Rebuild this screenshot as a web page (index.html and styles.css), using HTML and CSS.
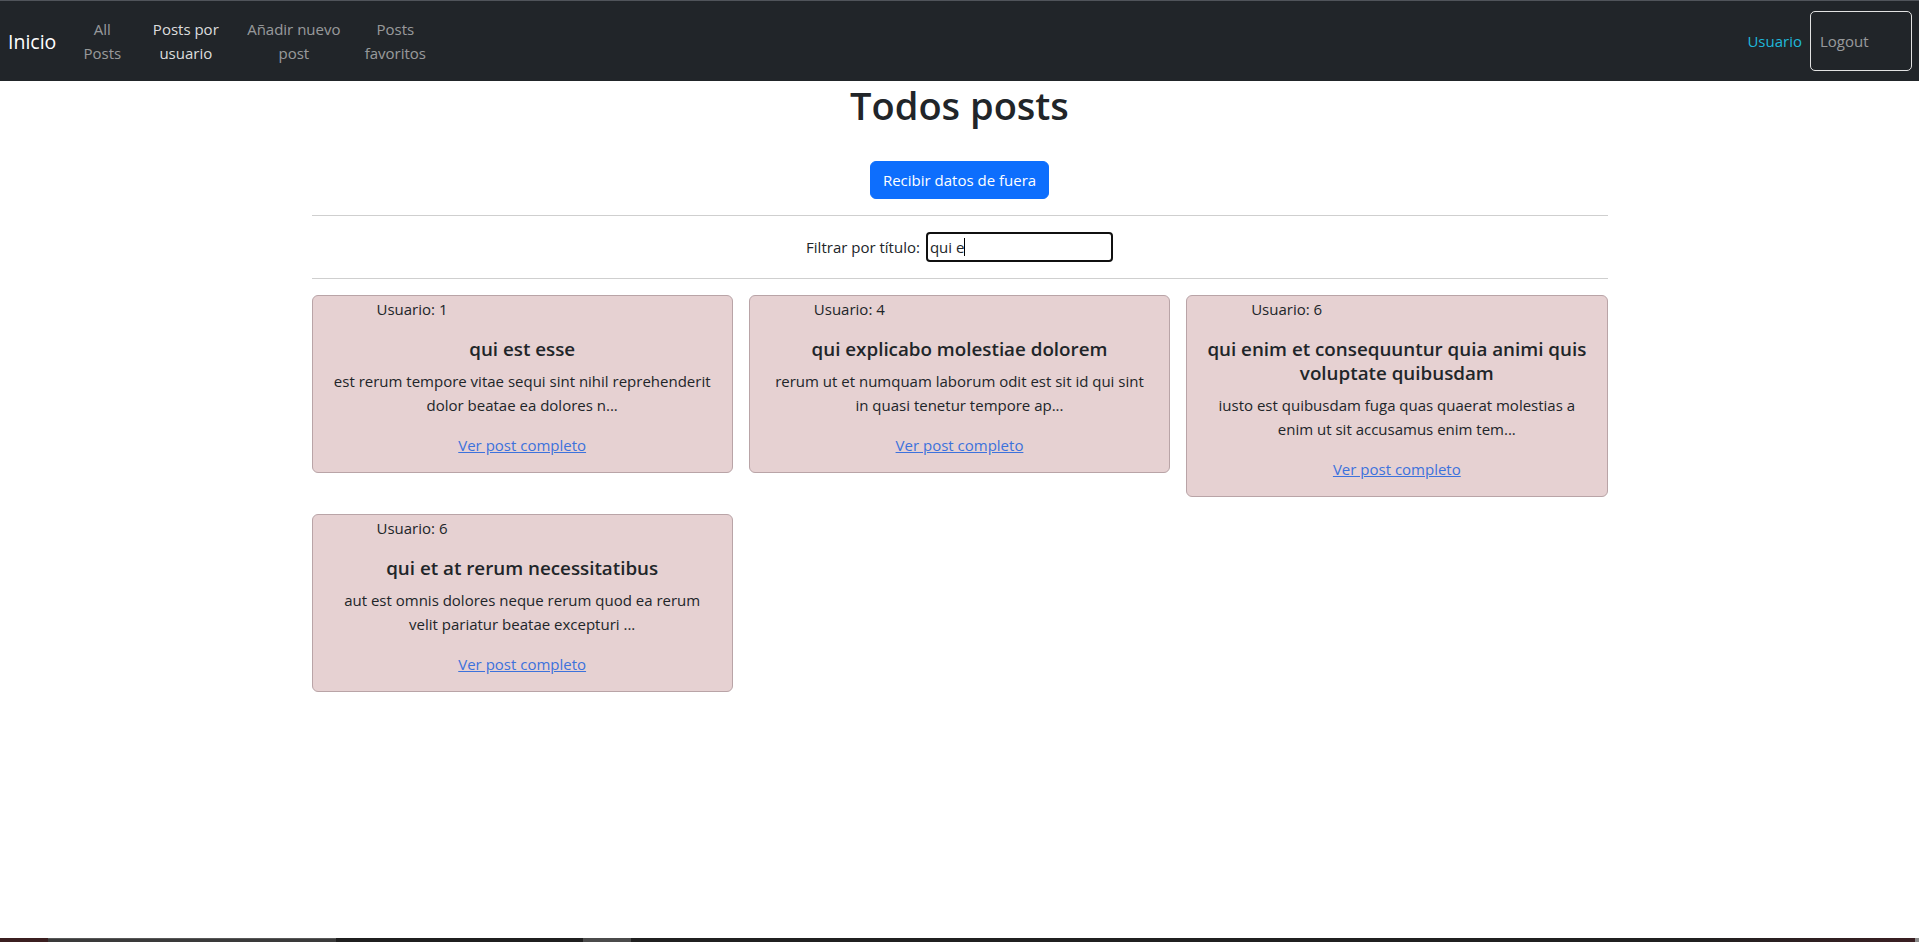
FILE: index.html
```html
<!DOCTYPE html>
<html lang="es">
<head>
<meta charset="utf-8">
<title>Todos posts</title>
<link rel="stylesheet" href="styles.css">
</head>
<body>
<nav class="navbar">
  <a class="brand" href="#">Inicio</a>
  <ul class="nav-list">
    <li class="nav-item w1"><a class="nav-link" href="#">All Posts</a></li>
    <li class="nav-item w2"><a class="nav-link active" href="#">Posts por usuario</a></li>
    <li class="nav-item w3"><a class="nav-link" href="#">Añadir nuevo post</a></li>
    <li class="nav-item w4"><a class="nav-link" href="#">Posts favoritos</a></li>
  </ul>
  <div class="nav-right">
    <span class="user-link">Usuario</span>
    <button class="logout" type="button">Logout</button>
  </div>
</nav>

<main class="container">
  <h1 class="page-title">Todos posts</h1>
  <div class="actions">
    <button class="btn-primary" type="button">Recibir datos de fuera</button>
  </div>
  <hr class="divider">
  <div class="filter-row">
    <label class="filter-label">Filtrar por título:</label>
    <div class="filter-input"><span class="filter-value">qui e</span><span class="caret"></span></div>
  </div>
  <hr class="divider">

  <section class="cards">
    <article class="card">
      <div class="card-user">Usuario: 1</div>
      <div class="card-body">
        <h5 class="card-title">qui est esse</h5>
        <p class="card-text">est rerum tempore vitae sequi sint nihil reprehenderit dolor beatae ea dolores n...</p>
        <a class="card-link" href="#">Ver post completo</a>
      </div>
    </article>
    <article class="card">
      <div class="card-user">Usuario: 4</div>
      <div class="card-body">
        <h5 class="card-title">qui explicabo molestiae dolorem</h5>
        <p class="card-text">rerum ut et numquam laborum odit est sit id qui sint in quasi tenetur tempore ap...</p>
        <a class="card-link" href="#">Ver post completo</a>
      </div>
    </article>
    <article class="card">
      <div class="card-user">Usuario: 6</div>
      <div class="card-body">
        <h5 class="card-title">qui enim et consequuntur quia animi quis voluptate quibusdam</h5>
        <p class="card-text">iusto est quibusdam fuga quas quaerat molestias a enim ut sit accusamus enim tem...</p>
        <a class="card-link" href="#">Ver post completo</a>
      </div>
    </article>
    <article class="card">
      <div class="card-user">Usuario: 6</div>
      <div class="card-body">
        <h5 class="card-title">qui et at rerum necessitatibus</h5>
        <p class="card-text">aut est omnis dolores neque rerum quod ea rerum velit pariatur beatae excepturi ...</p>
        <a class="card-link" href="#">Ver post completo</a>
      </div>
    </article>
  </section>
</main>

<footer class="taskbar">
  <span class="tb-seg tb-red"></span>
  <span class="tb-seg tb-gray"></span>
  <span class="tb-seg tb-dark1"></span>
  <span class="tb-seg tb-light"></span>
  <span class="tb-seg tb-fill"></span>
  <span class="tb-seg tb-glow"></span>
  <span class="tb-seg tb-end"></span>
</footer>
</body>
</html>
```

FILE: styles.css
```css
* {
  box-sizing: border-box;
}

html, body {
  margin: 0;
  padding: 0;
}

body {
  font-family: "Open Sans", "Noto Sans", sans-serif;
  font-size: 15px;
  line-height: 24px;
  color: #212529;
  background: #fff;
  min-height: 100vh;
  display: flex;
  flex-direction: column;
}

/* ---------- navbar ---------- */
.navbar {
  height: 81px;
  background: #212529;
  border-top: 1px solid #50545a;
  display: flex;
  align-items: center;
  padding: 0 7px 0 8px;
}

.brand {
  font-size: 19.5px;
  line-height: 30px;
  color: #fff;
  text-decoration: none;
  margin-right: 11px;
  padding-top: 2px;
}

.nav-list {
  list-style: none;
  margin: 0;
  padding: 0;
  display: flex;
  align-items: center;
}

.nav-item {
  text-align: center;
}

.w1 { width: 70px; }
.w2 { width: 97px; }
.w3 { width: 119px; }
.w4 { width: 84px; }

.nav-link {
  display: block;
  padding: 8px;
  color: rgba(255, 255, 255, 0.55);
  text-decoration: none;
}

.nav-link.active {
  color: rgba(255, 255, 255, 0.86);
}

.nav-right {
  margin-left: auto;
  display: flex;
  align-items: center;
}

.user-link {
  color: #1fb8da;
  margin-right: 8px;
}

.logout {
  width: 102px;
  height: 60px;
  border: 1px solid #e2e2e2;
  border-radius: 5px;
  background: transparent;
  color: rgba(255, 255, 255, 0.55);
  font: inherit;
  text-align: left;
  padding: 0 0 0 9px;
}

/* ---------- main ---------- */
.container {
  flex: 1;
  width: 100%;
  max-width: 1320px;
  margin: 0 auto;
  padding: 0 12px;
}

.page-title {
  margin: 0 0 8px;
  font-size: 38px;
  line-height: 48px;
  font-weight: 600;
  text-align: center;
}

.actions {
  display: flex;
  justify-content: center;
  margin-top: 32px;
}

.btn-primary {
  height: 38px;
  padding: 6px 12px;
  background: #0d6efd;
  border: 1px solid #0d6efd;
  border-radius: 6px;
  color: #fff;
  font: inherit;
}

.divider {
  margin: 16px 0;
  border: 0;
  border-top: 1px solid #cfcfcf;
}

.filter-row {
  display: flex;
  justify-content: center;
  align-items: center;
  height: 30px;
}

.filter-input {
  width: 187px;
  height: 30px;
  margin-left: 6px;
  border: 2px solid #101010;
  border-radius: 4px;
  padding: 0 2px;
  display: flex;
  align-items: center;
}

.caret {
  width: 1px;
  height: 18px;
  background: #000;
}

/* ---------- cards ---------- */
.cards {
  display: grid;
  grid-template-columns: repeat(3, 1fr);
  gap: 17px 16px;
  align-items: start;
}

.card {
  background: #e6d1d2;
  border: 1px solid #b9a4a7;
  border-radius: 6px;
  padding-top: 1px;
}

.card-user {
  padding-left: 64px;
}

.card-body {
  padding: 16px 18px 15px;
  text-align: center;
}

.card-title {
  margin: 0 0 8px;
  font-size: 18.8px;
  line-height: 24px;
  font-weight: 600;
}

.card-text {
  margin: 0 0 16px;
}

.card-link {
  color: #3d72dc;
}

/* ---------- bottom strip ---------- */
.taskbar {
  height: 4px;
  display: flex;
  background: #202020;
}

.tb-seg {
  display: block;
  height: 100%;
}

.tb-red { width: 48px; background: #3b1f20; }
.tb-gray { width: 288px; background: #3a3a3a; border-top: 1px solid #575757; }
.tb-dark1 { width: 247px; background: #1f1f1f; }
.tb-light { width: 48px; background: #4b4b4b; }
.tb-fill { flex: 1; background: #202020; }
.tb-glow { width: 220px; background: linear-gradient(90deg, #202020, #3a1f22); }
.tb-end { width: 4px; background: #8a8a8a; }
```
